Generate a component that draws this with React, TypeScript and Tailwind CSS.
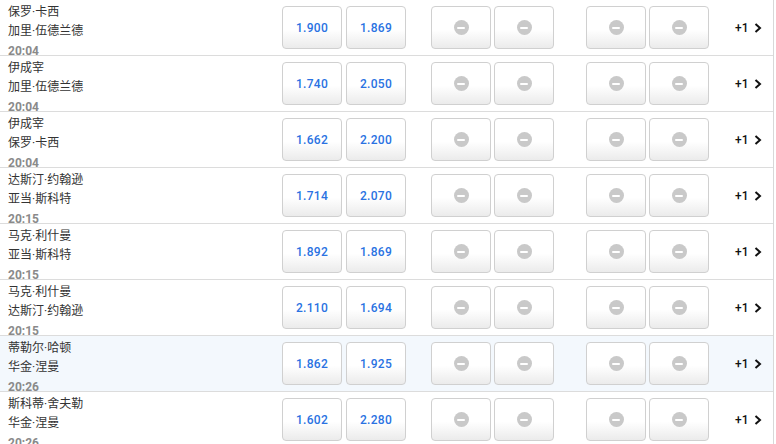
import React from "react";

type Row = { a: string; b: string; t: string; o1: string; o2: string; hl?: boolean };

const rows: Row[] = [
  { a: "保罗·卡西", b: "加里·伍德兰德", t: "20:04", o1: "1.900", o2: "1.869" },
  { a: "伊成宰", b: "加里·伍德兰德", t: "20:04", o1: "1.740", o2: "2.050" },
  { a: "伊成宰", b: "保罗·卡西", t: "20:04", o1: "1.662", o2: "2.200" },
  { a: "达斯汀·约翰逊", b: "亚当·斯科特", t: "20:15", o1: "1.714", o2: "2.070" },
  { a: "马克·利什曼", b: "亚当·斯科特", t: "20:15", o1: "1.892", o2: "1.869" },
  { a: "马克·利什曼", b: "达斯汀·约翰逊", t: "20:15", o1: "2.110", o2: "1.694" },
  { a: "蒂勒尔·哈顿", b: "华金·涅曼", t: "20:26", o1: "1.862", o2: "1.925", hl: true },
  { a: "斯科蒂·舍夫勒", b: "华金·涅曼", t: "20:26", o1: "1.602", o2: "2.280" },
];

const btn =
  "w-[60px] h-[43px] rounded-[4px] border border-[#d0d0d0] bg-[linear-gradient(180deg,#ffffff_55%,#ebebeb_100%)] flex items-center justify-center";

function Odd({ v }: { v: string }) {
  return (
    <div className={btn}>
      <span className="text-[12px] font-medium text-[#2a72e2] tracking-[0.3px]">{v}</span>
    </div>
  );
}

function Locked() {
  return (
    <div className={btn}>
      <div className="w-[15px] h-[15px] rounded-full bg-[#c9c9c9] flex items-center justify-center">
        <div className="w-[8px] h-[2px] bg-white rounded-[1px]" />
      </div>
    </div>
  );
}

export default function App() {
  return (
    <div
      className="w-[774px] bg-white border-r border-[#d8d8d8]"
      style={{ fontFamily: 'Roboto, "Noto Sans CJK SC", sans-serif' }}
    >
      {rows.map((r, i) => (
        <div
          key={i}
          className={`flex items-center h-[56px] border-b border-[#dcdcdc] ${r.hl ? "bg-[#f3f8fd]" : "bg-white"}`}
        >
          <div className="w-[282px] self-start pl-[8px] pt-[3px]">
            <div className="text-[12px] leading-[19px] text-[#333]">{r.a}</div>
            <div className="text-[12px] leading-[19px] text-[#333]">{r.b}</div>
            <div className="text-[12px] leading-[19px] font-bold text-[#8a8a8a] mt-[1px]">{r.t}</div>
          </div>
          <div className="flex gap-[4px]">
            <Odd v={r.o1} />
            <Odd v={r.o2} />
          </div>
          <div className="flex gap-[3px] ml-[25px]">
            <Locked />
            <Locked />
          </div>
          <div className="flex gap-[3px] ml-[32px]">
            <Locked />
            <Locked />
          </div>
          <div className="flex items-center ml-[26px] gap-[6px]">
            <span className="text-[12px] font-medium text-[#111]">+1</span>
            <svg width="8" height="10" viewBox="0 0 8 10">
              <path d="M1.5 1 L6 5 L1.5 9" fill="none" stroke="#111" strokeWidth="2" />
            </svg>
          </div>
        </div>
      ))}
    </div>
  );
}
